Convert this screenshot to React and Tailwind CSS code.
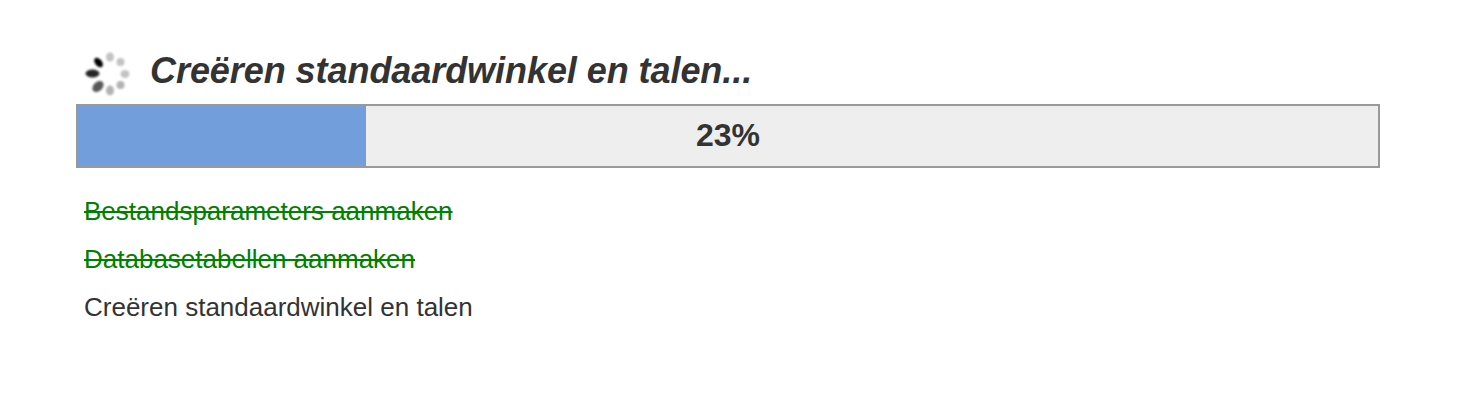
export default function App() {
  const dots = [
    { cx: 110, cy: 55, rx: 4, ry: 4.5, o: 0.24, r: 0 },
    { cx: 120.5, cy: 60, rx: 4, ry: 4, o: 0.24, r: 0 },
    { cx: 125, cy: 72, rx: 4.5, ry: 4, o: 0.24, r: 0 },
    { cx: 120.5, cy: 83, rx: 4, ry: 4, o: 0.3, r: 0 },
    { cx: 110, cy: 88.5, rx: 4, ry: 5, o: 0.3, r: 0 },
    { cx: 98, cy: 84.5, rx: 6.5, ry: 4.5, o: 0.65, r: -45 },
    { cx: 92.5, cy: 71.5, rx: 7, ry: 4, o: 0.85, r: 0 },
    { cx: 98.5, cy: 60.5, rx: 5.5, ry: 3.4, o: 1, r: 50 },
  ];
  return (
    <div className="w-[1458px] h-[404px] bg-white px-[76px] pt-[44px] text-[#333] font-['Liberation_Sans',Arial,sans-serif] overflow-hidden">
      <div className="flex items-center h-[60px] pl-[8px]">
        <svg width="48" height="48" viewBox="84 48 48 48" className="shrink-0" aria-hidden="true">
          <defs>
            <filter id="spinblur" x="-30%" y="-30%" width="160%" height="160%">
              <feGaussianBlur stdDeviation="1.3" />
            </filter>
          </defs>
          <g filter="url(#spinblur)">
            {dots.map((d, i) => (
              <ellipse
                key={i}
                cx={d.cx}
                cy={d.cy}
                rx={d.rx}
                ry={d.ry}
                fill="#000"
                opacity={d.o}
                transform={`rotate(${d.r} ${d.cx} ${d.cy})`}
              />
            ))}
          </g>
        </svg>
        <h1 className="ml-[18px] mb-[6px] text-[36px] leading-[52px] tracking-[-0.06px] font-bold italic">Creëren standaardwinkel en talen...</h1>
      </div>
      <div className="relative w-[1304px] h-[64px] border-2 border-[#999] bg-[#eee] flex items-center justify-center">
        <div className="absolute left-0 top-0 bottom-0 w-[288px] bg-[#729fdc]" />
        <span className="relative text-[32px] leading-[36px] font-bold mb-[2px]">23%</span>
      </div>
      <ul className="mt-[19px] pl-[8px] text-[26px] leading-[48px]">
        <li className="line-through decoration-2 text-[#008000]">Bestandsparameters aanmaken</li>
        <li className="line-through decoration-2 text-[#008000]">Databasetabellen aanmaken</li>
        <li>Creëren standaardwinkel en talen</li>
      </ul>
    </div>
  );
}
